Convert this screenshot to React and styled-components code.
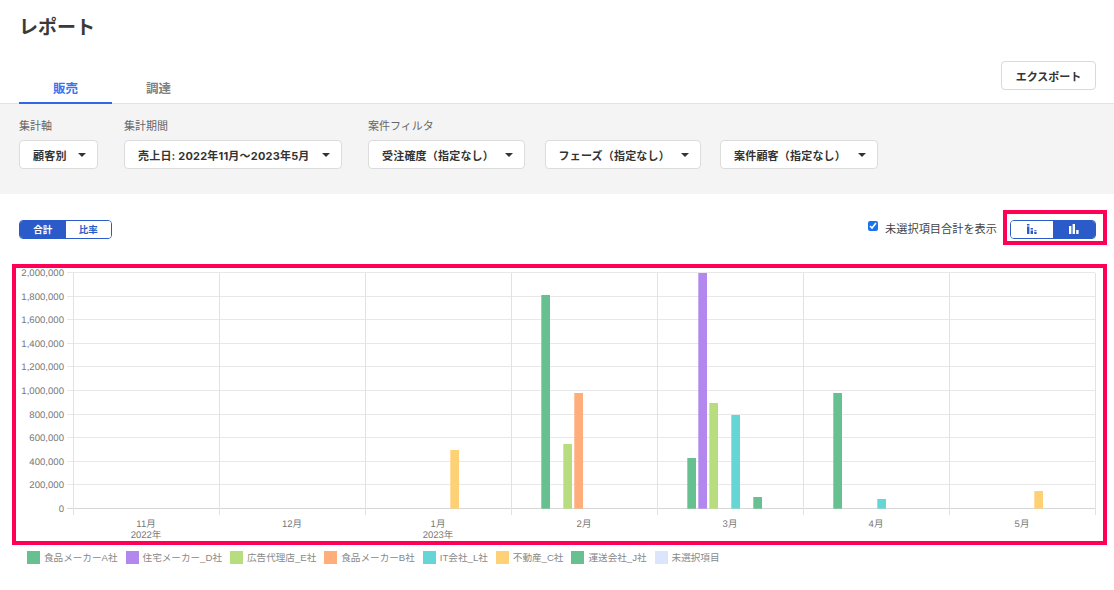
import React from 'react';
import styled, { createGlobalStyle } from 'styled-components';

const Sans = `"Liberation Sans", "Noto Sans CJK JP", sans-serif`;
const Ui = `Inter, "Noto Sans CJK JP", sans-serif`;

const Global = createGlobalStyle`
  html, body { margin: 0; padding: 0; background: #fff; }
  body { font-family: ${Sans}; color: #333; overflow: hidden; }
  * { box-sizing: border-box; }
`;

const Page = styled.div`width: 1114px; height: 590px; overflow: hidden; background: #fff;`;
const Header = styled.header`height: 104px; padding: 15px 18px 0 19px; border-bottom: 1px solid #e3e3e3; display: flex; flex-direction: column;`;
const Title = styled.h1`margin: 0; font-size: 19px; line-height: 26px; font-weight: 700; color: #3a3a3a; height: 46px;`;
const HeaderRow = styled.div`flex: 1; display: flex; justify-content: space-between; align-items: flex-start;`;
const Tabs = styled.nav`display: flex; align-self: flex-end; margin-bottom: -1px;`;
const Tab = styled.div`
  width: 93px; height: 24px; text-align: center; font-size: 12.5px; line-height: 18px; font-weight: 700;
  color: ${p => (p.$active ? '#3b73ee' : '#808080')};
  border-bottom: 2px solid ${p => (p.$active ? '#2f67e8' : 'transparent')};
`;
const ExportButton = styled.button`
  width: 95px; height: 29px; padding: 0; background: #fff; border: 1px solid #d9d9d9; border-radius: 4px;
  font: 700 11px ${Sans}; color: #333;
`;
const FilterBand = styled.section`height: 90px; background: #f5f4f5; padding: 14px 0 0 19px; display: flex;`;
const Group = styled.div`margin-right: ${p => p.$mr}px;`;
const Label = styled.div`font-size: 11px; line-height: 14px; color: #666; padding-top: 1px; margin-bottom: 7px;`;
const Selects = styled.div`display: flex; gap: ${p => p.$gap || 0}px;`;
const Select = styled.div`
  width: ${p => p.$w}px; height: 29px; background: #fff; border: 1px solid #dcdcdc; border-radius: 4px;
  display: flex; align-items: center; justify-content: space-between; padding: 0 13px;
  font: 700 11px ${Ui}; letter-spacing: 0.2px; color: #333; white-space: nowrap;
`;
const Caret = styled.span`width: 0; height: 0; border-left: 4px solid transparent; border-right: 4px solid transparent; border-top: 4px solid #333; margin-right: -2px;`;
const Toolbar = styled.div`height: 70px; padding: 26px 7px 0 19px; display: flex; justify-content: space-between; align-items: flex-start;`;
const Pills = styled.div`display: flex; width: ${p => p.$w}px; height: 19px; border: 1px solid #2a5bc9; border-radius: 4px; overflow: hidden;`;
const Pill = styled.div`
  flex: 1; display: flex; align-items: center; justify-content: center; font-size: 9.5px; font-weight: 700; padding-bottom: 1px;
  background: ${p => (p.$active ? '#2a5bc9' : '#fff')}; color: ${p => (p.$active ? '#fff' : '#2a5bc9')};
`;
const RightTools = styled.div`display: flex; align-items: flex-start;`;
const CheckLabel = styled.label`display: flex; align-items: center; gap: 7px; font-size: 11.2px; color: #444; margin: 0 6px 0 0; height: 16px;`;
const Check = styled.input`width: 10px; height: 10px; margin: 0 0 4px; accent-color: #1a73e8;`;
const Highlight = styled.div`border: 4px solid #ff0055;`;
const ToggleBox = styled(Highlight)`margin-top: -10px; padding: 6px 7px 2px 3px; height: 35px; width: 104px;`;
const ChartBox = styled(Highlight)`width: 1095px; height: 281px; margin-left: 12px;`;
const ChartSvg = styled.svg`display: block; text-rendering: geometricPrecision;`;
const Legend = styled.div`display: flex; padding: 6px 0 0 27px; font-size: 9.6px; color: #888; line-height: 13px;`;
const LegendItem = styled.div`display: flex; align-items: center; gap: 4px; margin-right: 8px; white-space: nowrap;`;
const Swatch = styled.span`width: 13px; height: 13px; background: ${p => p.$c};`;

const Colors = { a: '#66c08f', d: '#b388ee', e: '#b8dd7e', b: '#ffad7a', l: '#66d5d5', c: '#ffd176', j: '#66c08f', x: '#dbe6fd' };
const bars = [
  [450, 450, 'c'], [541, 295, 'a'], [563, 444, 'e'], [574, 393, 'b'],
  [687, 458, 'a'], [698, 273, 'd'], [709, 403, 'e'], [731, 415, 'l'], [753, 497, 'j'],
  [833, 393, 'a'], [877, 499, 'l'], [1034, 491, 'c'],
];
const ylabels = ['2,000,000', '1,800,000', '1,600,000', '1,400,000', '1,200,000', '1,000,000', '800,000', '600,000', '400,000', '200,000', '0'];
const months = ['11月', '12月', '1月', '2月', '3月', '4月', '5月'];
const legend = [
  ['a', '食品メーカーA社'], ['d', '住宅メーカー_D社'], ['e', '広告代理店_E社'], ['b', '食品メーカーB社'],
  ['l', 'IT会社_L社'], ['c', '不動産_C社'], ['j', '運送会社_J社'], ['x', '未選択項目'],
];

const Chart = () => (
  <ChartSvg width="1087" height="273" viewBox="16 268 1087 273">
    {ylabels.map((t, i) => {
      const y = Math.round(272 + i * 23.6) + 0.5;
      return (
        <g key={t}>
          <line x1="67" x2="1095" y1={y} y2={y} stroke={i === 10 ? '#d6d6d6' : '#e8e8e8'} />
          <text x="64" y={y + 3.5} textAnchor="end" fontSize="9.6" fill="#777">{t}</text>
        </g>
      );
    })}
    {[73, 219, 365, 511, 657, 803, 949, 1095].map(x => (
      <line key={x} x1={x + 0.5} x2={x + 0.5} y1="273" y2="515" stroke="#e2e2e2" />
    ))}
    {bars.map(([x, y, k]) => (
      <rect key={x} x={x + 0.3} y={y} width="8.7" height={508.7 - y} fill={Colors[k]} />
    ))}
    {months.map((m, i) => (
      <text key={m} x={146 + i * 146} y="527" textAnchor="middle" fontSize="9.5" fill="#777">{m}</text>
    ))}
    <text x="146" y="538" textAnchor="middle" fontSize="9.5" fill="#777">2022年</text>
    <text x="438" y="538" textAnchor="middle" fontSize="9.5" fill="#777">2023年</text>
  </ChartSvg>
);

const GroupedIcon = ({ c }) => (
  <svg width="10" height="10" viewBox="0 0 10 10" fill={c}>
    <rect x="0" y="0" width="2.4" height="1.5" />
    <rect x="0" y="2.5" width="2.4" height="7.5" />
    <rect x="3.6" y="4" width="2.4" height="1.5" />
    <rect x="3.6" y="6.5" width="2.4" height="3.5" />
    <rect x="7.2" y="6.2" width="2.4" height="1" />
    <rect x="7.2" y="8" width="2.4" height="2" />
  </svg>
);
const BarIcon = ({ c }) => (
  <svg width="10" height="10" viewBox="0 0 10 10" fill={c}>
    <rect x="0" y="2" width="2.4" height="8" />
    <rect x="3.6" y="0" width="2.4" height="10" />
    <rect x="7.2" y="6" width="2.4" height="4" />
  </svg>
);

export default function App() {
  return (
    <Page>
      <Global />
      <Header>
        <Title>レポート</Title>
        <HeaderRow>
          <Tabs>
            <Tab $active>販売</Tab>
            <Tab>調達</Tab>
          </Tabs>
          <ExportButton>エクスポート</ExportButton>
        </HeaderRow>
      </Header>
      <FilterBand>
        <Group $mr={26}>
          <Label>集計軸</Label>
          <Select $w={79}>顧客別<Caret /></Select>
        </Group>
        <Group $mr={26}>
          <Label>集計期間</Label>
          <Select $w={218}>売上日: 2022年11月〜2023年5月<Caret /></Select>
        </Group>
        <Group>
          <Label>案件フィルタ</Label>
          <Selects $gap={19.5}>
            <Select $w={157}>受注確度（指定なし）<Caret /></Select>
            <Select $w={156}>フェーズ（指定なし）<Caret /></Select>
            <Select $w={158}>案件顧客（指定なし）<Caret /></Select>
          </Selects>
        </Group>
      </FilterBand>
      <Toolbar>
        <Pills $w={93}>
          <Pill $active>合計</Pill>
          <Pill>比率</Pill>
        </Pills>
        <RightTools>
          <CheckLabel><Check type="checkbox" defaultChecked readOnly />未選択項目合計を表示</CheckLabel>
          <ToggleBox>
            <Pills $w={86}>
              <Pill><GroupedIcon c="#2a5bc9" /></Pill>
              <Pill $active><BarIcon c="#fff" /></Pill>
            </Pills>
          </ToggleBox>
        </RightTools>
      </Toolbar>
      <ChartBox><Chart /></ChartBox>
      <Legend>
        {legend.map(([k, t]) => (
          <LegendItem key={t}><Swatch $c={Colors[k]} />{t}</LegendItem>
        ))}
      </Legend>
    </Page>
  );
}
